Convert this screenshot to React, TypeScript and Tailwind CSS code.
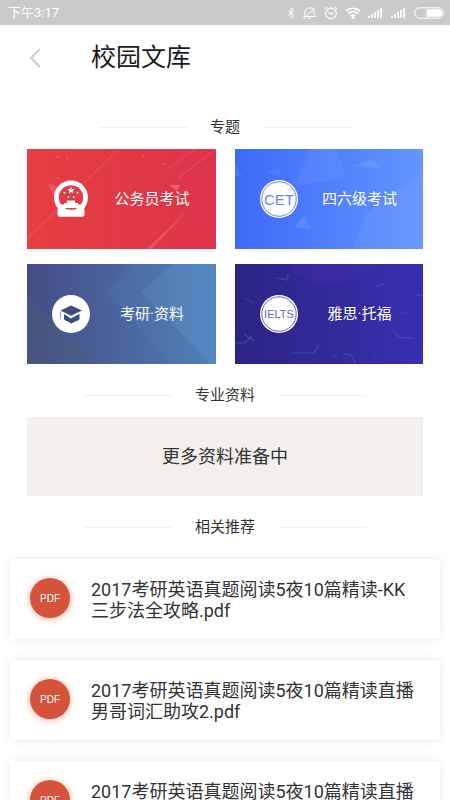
import type { ReactNode } from 'react';

const font = "font-[Roboto,'Noto_Sans_CJK_SC',sans-serif]";

function SignalBars() {
  return (
    <svg className="h-3 w-4" viewBox="0 0 16 12" fill="white" fillOpacity=".85" aria-hidden="true">
      <rect x="0" y="9" width="2" height="2" />
      <rect x="3" y="7" width="2" height="4" />
      <rect x="6" y="5" width="2" height="6" />
      <rect x="9" y="3" width="2" height="8" />
      <rect x="12" y="1" width="2" height="10" />
    </svg>
  );
}

function StatusBar() {
  return (
    <div className="flex h-[25px] items-center justify-between bg-[#cacaca] pr-[6px] pl-2 text-[13px] text-white">
      <span>下午3:17</span>
      <div className="flex items-center gap-[7px]">
        <svg className="h-3 w-2" viewBox="0 0 8 12" fill="none" stroke="white" aria-hidden="true">
          <path d="M.7 3.2 7 8.6 4 11.3V.7L7 3.4.7 8.8" />
        </svg>
        <svg className="h-[14px] w-[15px]" viewBox="0 0 15 14" fill="none" stroke="white" aria-hidden="true">
          <path d="M1.5 10.5h12L12 8.700V5.500C12 3.200 10 1.800 7.500 1.800S3 3.200 3 5.500v3.200zM6 12.300h3M13.500 1 1.500 13" />
        </svg>
        <svg className="h-[14px] w-[14px]" viewBox="0 0 14 14" fill="none" stroke="white" strokeWidth="1.1" aria-hidden="true">
          <circle cx="7" cy="7.4" r="5.3" />
          <path d="m4.3 6.2 2.7 2 2.8-2M.7 3.2 3.3.8M13.3 3.2 10.7.8" />
        </svg>
        <svg className="h-3 w-4" viewBox="0 0 16 12" fill="none" stroke="white" strokeWidth="1.6" aria-hidden="true">
          <path d="M.8 4.2c4.2-4 10.200-4 14.400 0M3.200 6.700c2.900-2.700 6.700-2.700 9.600 0M5.600 9c1.500-1.300 3.300-1.300 4.800 0" />
          <circle cx="8" cy="10.500" r=".7" fill="white" />
        </svg>
        <SignalBars />
        <SignalBars />
        <svg className="h-3 w-[30px]" viewBox="0 0 30 12" aria-hidden="true">
          <rect x=".6" y=".8" width="28.800" height="10.400" rx="5.200" fill="none" stroke="white" />
          <path d="M12.500 2.300H24.500a3.700 3.700 0 0 1 0 7.400H12.500z" fill="white" />
        </svg>
      </div>
    </div>
  );
}

function SectionTitle({ children }: { children: ReactNode }) {
  return (
    <h2 className="flex items-center justify-center gap-[23px] text-[15px] leading-5 text-[#333]">
      <span className="h-px w-[88px] bg-[#f0f0f0]" />
      {children}
      <span className="h-px w-[88px] bg-[#f0f0f0]" />
    </h2>
  );
}

function Tile({ label, tone, art, icon }: { label: string; tone: string; art: ReactNode; icon: ReactNode }) {
  return (
    <button type="button" className={`relative h-[100px] overflow-hidden ${tone}`}>
      <svg className="absolute inset-0 h-full w-full" viewBox="0 0 188 100" preserveAspectRatio="none" aria-hidden="true">
        {art}
      </svg>
      <span className="relative flex items-center pl-6 text-[15px] text-white">
        <svg className="h-10 w-10 shrink-0" viewBox="0 0 40 40" aria-hidden="true">
          {icon}
        </svg>
        <span className="ml-[21px] w-20 text-center whitespace-nowrap">{label}</span>
      </span>
    </button>
  );
}

function RingBadge({ text, size, color }: { text: string; size: number; color: string }) {
  return (
    <>
      <circle cx="20" cy="20" r="19" fill="white" />
      <circle cx="20" cy="20" r="17.200" fill="none" stroke={color} strokeWidth="1" />
      <text
        x="20"
        y={20 + size * 0.37}
        textAnchor="middle"
        fontFamily="Liberation Sans, sans-serif"
        fontSize={size}
        fill={color}
      >
        {text}
      </text>
    </>
  );
}

const redArt = (
  <>
    <path d="M0 90 92 0M158 63 120 100M188 0 150 30" stroke="#f78590" strokeOpacity=".3" fill="none" />
    <path d="m158 64-38 36h5z" fill="#f78590" fillOpacity=".3" />
    <path d="m164 0-26 20h5l27-20z" fill="#e7448a" fillOpacity=".35" />
    <path d="m20 34 17 6-8 11z" fill="#f08a90" fillOpacity=".35" />
    <path d="m142 36h11l-4 6z" fill="#f08aa0" fillOpacity=".5" />
    <path d="M30 7h2v2h-2zM39 8h2v2h-2zM115 6h2v2h-2zM30 28h2v2h-2zM136 14h2v2h-2z" fill="#f3788a" fillOpacity=".45" />
  </>
);

const blueArt = (
  <g fill="#a4c8ff">
    <path d="M75 0 59 38 111 28 101 0z" fillOpacity=".1" />
    <path d="m137 10-19 7 29 2z" fillOpacity=".18" />
    <path d="m69 67-9 11 16 2z" fillOpacity=".2" />
    <path d="M188 24 131 64l-14 36h71z" fillOpacity=".1" />
    <path d="M0 13 7 27H0zM31 22l13-2 1 7zM178 0l10 8V0z" fillOpacity=".12" />
  </g>
);

const navyArt = (
  <>
    <path d="M145 0 114 28l69 72h5V0z" fill="#68a2d5" fillOpacity=".28" />
    <path d="M105 0 78 28l68 72h37l-69-72L145 0z" fill="#557fb5" fillOpacity=".25" />
    <path d="m0 33 70 67H0z" fill="#496078" fillOpacity=".4" />
  </>
);

const indigoArt = (
  <>
    <path d="M50 0q28 30 70 15L145 0z" fill="#5634ca" fillOpacity=".18" />
    <g fill="none" stroke="#5d82de" strokeOpacity=".4" strokeWidth="1.200">
      <path d="M58 89h21l4-8M9 70l10 7M0 79h9l8-7M159 69l7 5h11M107 90l9 1 4 8M42 14l10 2 1-6M140 23l8-3M180 31h8" />
      <path d="M52 45h10M10 34l8 5M96 92h7M137 90h5M164 48l9 2" strokeOpacity=".25" />
    </g>
  </>
);

const emblemIcon = (
  <>
    <circle cx="20" cy="18.500" r="17" fill="white" />
    <rect x="6.500" y="29" width="27" height="8.800" rx="2" fill="white" />
    <circle cx="20" cy="18.500" r="12.200" fill="#e23b48" />
    <path d="M9.500 25.500h3.500v-1.500h3v-2.500h8v2.500h3v1.500h3.500l-2 3.500h-17z" fill="white" />
    <path d="m20 7.500 1 2.500 2.700.1-2.100 1.700.7 2.600L20 12.900l-2.300 1.500.7-2.600-2.100-1.700 2.700-.1z" fill="white" />
    <g fill="white">
      <circle cx="13.500" cy="13.700" r="1" />
      <circle cx="26.500" cy="13.700" r="1" />
      <circle cx="17.300" cy="18" r="1" />
      <circle cx="22.700" cy="18" r="1" />
    </g>
  </>
);

const capIcon = (
  <>
    <circle cx="20" cy="20" r="19" fill="white" />
    <path d="M9.500 16.500 20 11.500l11 5-11 5.200z" fill="#3c4b84" />
    <path
      d="M13 20 20 24.500 28.500 19.700v5.500q-1.300 1.300-3.500 2-2.500.7-4.500 2.500-2-1.800-4.300-2.500-2-.7-3.200-2z"
      fill="#3c4b84"
    />
    <path d="M9.500 17v7.500" stroke="#9aa2bf" />
  </>
);

const files = [
  '2017考研英语真题阅读5夜10篇精读-KK三步法全攻略.pdf',
  '2017考研英语真题阅读5夜10篇精读直播男哥词汇助攻2.pdf',
  '2017考研英语真题阅读5夜10篇精读直播',
];

export default function App() {
  return (
    <div className={`h-screen overflow-hidden bg-white ${font}`}>
      <StatusBar />
      <header className="flex h-[66px] items-center pl-[29px]">
        <button type="button" aria-label="返回" className="w-[62px]">
          <svg className="h-5 w-3" viewBox="0 0 12 20" fill="none" stroke="#c9cdd3" strokeWidth="2" aria-hidden="true">
            <path d="M11 1 2 10l9 9" />
          </svg>
        </button>
        <h1 className="text-[25px] text-[#1c1c1c]">校园文库</h1>
      </header>
      <main className="pt-[26px]">
        <SectionTitle>专题</SectionTitle>
        <div className="mx-[27px] mt-3 mb-[21px] grid grid-cols-2 gap-x-[19px] gap-y-[15px]">
          <Tile label="公务员考试" tone="bg-linear-to-r from-[#e63e42] to-[#dd3449]" art={redArt} icon={emblemIcon} />
          <Tile
            label="四六级考试"
            tone="bg-linear-to-r from-[#3f69f8] to-[#6394ff]"
            art={blueArt}
            icon={<RingBadge text="CET" size={15} color="#6a86f2" />}
          />
          <Tile label="考研·资料" tone="bg-linear-to-r from-[#454c84] to-[#4d7fb8]" art={navyArt} icon={capIcon} />
          <Tile
            label="雅思·托福"
            tone="bg-linear-to-r from-[#2c2483] to-[#382fb2]"
            art={indigoArt}
            icon={<RingBadge text="IELTS" size={11} color="#6a65be" />}
          />
        </div>
        <SectionTitle>专业资料</SectionTitle>
        <div className="mx-[27px] mt-3 mb-[21px] flex h-[79px] items-center justify-center bg-[#f3efec] text-[18px] text-[#333]">
          更多资料准备中
        </div>
        <SectionTitle>相关推荐</SectionTitle>
        <ul className="mx-[10px] mt-[22px] flex flex-col gap-[21px]">
          {files.map((name) => (
            <li key={name}>
              <a
                href="#"
                className="flex min-h-20 items-start rounded-sm bg-white pr-6 pl-5 shadow-[0_0_8px_rgba(110,155,225,0.22)]"
              >
                <span className="mt-[19px] mr-[21px] flex h-10 w-10 shrink-0 items-center justify-center rounded-full bg-[#d5533a] font-['Liberation_Sans',sans-serif] text-[10px] text-white shadow-[0_1px_7px_rgba(245,95,60,0.5)]">
                  PDF
                </span>
                <span className="pt-5 text-[18px] leading-[21px] break-all text-[#333]">{name}</span>
              </a>
            </li>
          ))}
        </ul>
      </main>
    </div>
  );
}
